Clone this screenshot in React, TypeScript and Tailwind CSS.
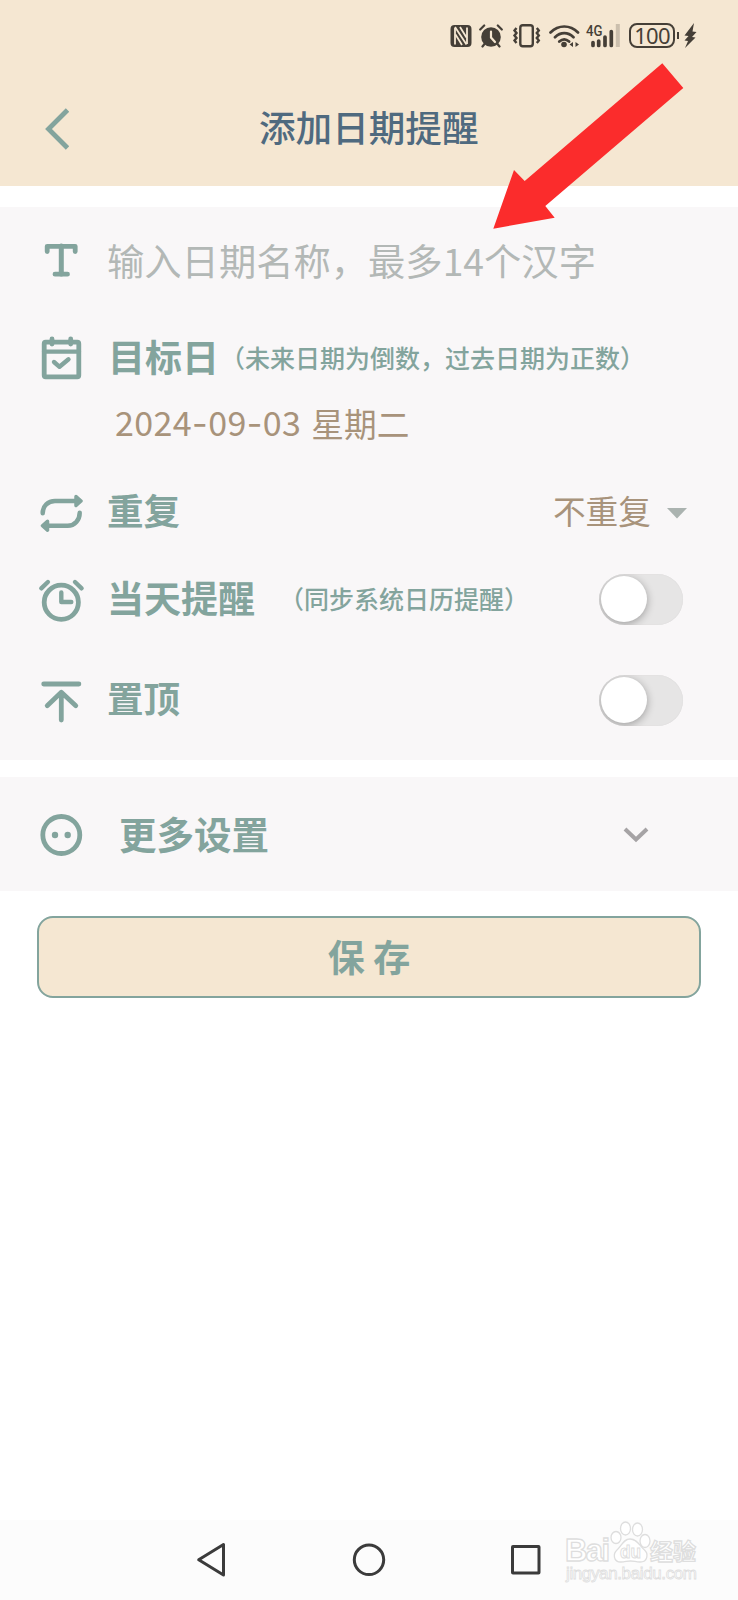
import { useState } from 'react';
import type { ReactNode } from 'react';

function RowIcon({ children }: { children: ReactNode }) {
  return (
    <svg
      width="44"
      height="44"
      viewBox="0 0 44 44"
      fill="none"
      stroke="#83a49d"
      strokeWidth="4.8"
      strokeLinecap="round"
      strokeLinejoin="round"
      className="mr-[24px] shrink-0 overflow-visible"
    >
      {children}
    </svg>
  );
}

function StatusBar() {
  return (
    <div className="flex h-[71px] items-center pl-[450px] text-[#453f37]">
      {/* NFC */}
      <svg width="22" height="24" viewBox="0 0 22 24" fill="none">
        <path d="M4.500 1h13a4 4 0 0 1 4 4v14a4 4 0 0 1-4 4h-13a4 4 0 0 1-4-4V5a4 4 0 0 1 4-4z" fill="currentColor" />
        <path d="M5 4v16.500M17 20V3.500" stroke="#f5e7d2" strokeWidth="1.8" />
        <path d="M5 3l11.500 17.500M10 3l6.500 10.500M5.500 10.500l6.500 10.500" stroke="#f5e7d2" strokeWidth="1.8" />
      </svg>
      {/* alarm */}
      <svg width="24" height="24" viewBox="0 0 24 24" fill="none" className="ml-[7px]">
        <circle cx="12" cy="13" r="9.800" fill="currentColor" />
        <path d="M1.200 5.500l4-4M22.800 5.500l-4-4M5.500 20l-2 2.500M18.500 20l2 2.500" stroke="currentColor" strokeWidth="2.200" strokeLinecap="round" />
        <path d="M12 7.500v6l4 4.500" stroke="#f5e7d2" strokeWidth="2.200" strokeLinecap="round" />
      </svg>
      {/* vibrate */}
      <svg width="30" height="24" viewBox="0 0 30 24" fill="none" stroke="currentColor" className="ml-[9px]">
        <rect x="8.300" y="1.300" width="12.500" height="21" rx="2.500" strokeWidth="2.400" />
        <path d="M4.500 4l-2 2.500 2 2.500-2 2.500 2 2.500-2 2.500 2 2.500M24.800 4l2 2.500-2 2.500 2 2.500-2 2.500 2 2.500-2 2.500" strokeWidth="2.400" />
      </svg>
      {/* wifi */}
      <svg width="32" height="24" viewBox="0 0 32 24" fill="none" stroke="currentColor" className="ml-[7px]">
        <path d="M1.500 8.500c8-8 19.500-8 27.500 0M6 13.200c5.500-5.400 13-5.400 18.500 0M10.300 17.500c3-2.700 6.800-2.700 9.800 0" strokeWidth="2.700" strokeLinecap="round" />
        <circle cx="15" cy="20.500" r="2.800" fill="currentColor" stroke="none" />
        <path d="M20.500 20.500l3.500-2.500v5zM30 20.500l-3.500-2.500v5z" fill="currentColor" stroke="none" />
      </svg>
      {/* signal */}
      <svg width="36" height="24" viewBox="0 0 36 24" className="ml-[5px] overflow-visible">
        <text x="0" y="11.500" fontSize="14" fontWeight="500" fill="currentColor" textLength="16.500" lengthAdjust="spacingAndGlyphs" className="font-['Roboto',sans-serif]">
          4G
        </text>
        <path d="M7 18.500v3M12.700 17v4.500M19 13v8.500M25.300 7.500v14" stroke="currentColor" strokeWidth="3.700" strokeLinecap="round" />
        <path d="M31.800 0v23" stroke="#cbbfad" strokeWidth="4" />
      </svg>
      {/* battery */}
      <div className="ml-[7px] flex h-[25px] w-[46px] items-center justify-center rounded-[8px] border-2 border-current pb-[2px] font-['Noto_Sans'] text-[22px] leading-none tracking-[-0.8px]">
        100
      </div>
      <div className="ml-[2px] h-[7px] w-[2px] bg-current" />
      <svg width="13" height="25" viewBox="0 0 13 25" fill="currentColor" className="ml-[5px]">
        <path d="M10 0L.5 12.500l4 .5L.5 17.500l3.500.5L1 25l10.500-10.500-3.500-.5L12.500 9l-4-.5z" />
      </svg>
    </div>
  );
}

function Switch({ label }: { label: string }) {
  const [on, setOn] = useState(false);
  return (
    <button
      role="switch"
      aria-label={label}
      aria-checked={on}
      onClick={() => setOn(!on)}
      className={`mr-[55px] ml-auto flex h-[51px] w-[84px] items-center overflow-hidden rounded-full p-[2px] shadow-[inset_0_0_1px_#cfcdcd] ${on ? 'justify-end bg-[#83a49d]' : 'bg-[#e6e5e5]'}`}
    >
      <span className="size-[46px] rounded-full bg-white shadow-[0_2px_8px_rgba(0,0,0,0.32)]" />
    </button>
  );
}

function Watermark() {
  return (
    <svg
      width="140"
      height="72"
      viewBox="0 0 140 72"
      fill="#fff"
      stroke="#dedede"
      strokeWidth="1.300"
      className="absolute top-[-4px] left-[563px]"
    >
      <text x="2" y="45" fontSize="31" fontWeight="700" textLength="45" className="font-['Liberation_Sans',sans-serif]">
        Bai
      </text>
      <ellipse cx="53" cy="21.500" rx="5" ry="6" />
      <ellipse cx="62.500" cy="12.500" rx="5" ry="6.500" />
      <ellipse cx="74.500" cy="13.500" rx="5" ry="6.500" />
      <ellipse cx="82" cy="25" rx="5" ry="6.500" />
      <path d="M67 23c-7 0-8 7-13 11-4 3.500-4 12 4 12 4 0 6-1 9.500-1s5.500 1 9.500 1c8 0 8.500-8.500 4.500-12-5-4-7-11-14.500-11z" />
      <text x="57" y="42" fontSize="19" fontWeight="700" strokeWidth="1" textLength="21" lengthAdjust="spacingAndGlyphs" className="font-['Liberation_Sans',sans-serif]">
        du
      </text>
      <text x="87" y="44" fontSize="23" fontWeight="700" className="font-['Noto_Sans_CJK_SC',sans-serif]">
        经验
      </text>
      <text x="3" y="63" fontSize="17" strokeWidth=".8" textLength="131" className="font-['Liberation_Sans',sans-serif]">
        jingyan.baidu.com
      </text>
    </svg>
  );
}

export default function App() {
  return (
    <div className="relative flex h-[1600px] w-[738px] flex-col overflow-hidden bg-white font-['Noto_Sans_CJK_SC',sans-serif] text-[#83a49d]">
      <header className="h-[186px] bg-[#f5e7d2]">
        <StatusBar />
        <div className="flex h-[115px] items-center">
          <svg width="24" height="42" viewBox="0 0 24 42" fill="none" className="ml-[45px]" stroke="#83a49d" strokeWidth="4.800">
            <path d="M22.500 2L3.500 21l19 19" />
          </svg>
          <h1 className="ml-[190px] -mt-[2px] text-[36.600px] leading-none font-medium text-[#4f6a7f]">添加日期提醒</h1>
        </div>
      </header>

      <section className="mt-[21px] h-[553px] bg-[#f9f7f8] pl-[39px]">
        <div className="flex h-[110px] items-center">
          <RowIcon>
            <path d="M8.200 11.500V6.300h28v5.200M16 34.200h12.500" />
            <path d="M22.300 6v28" strokeWidth="5" />
          </RowIcon>
          <span className="-mt-[2px] text-[37.300px] leading-none text-[#b3b8b6]">输入日期名称，最多14个汉字</span>
        </div>

        <div className="flex h-[82px] items-center">
          <RowIcon>
            <rect x="5.200" y="6.200" width="34.600" height="34.600" rx="1.500" />
            <path d="M5 15.700h35" strokeWidth="4.200" />
            <path d="M13 3v5M31.700 3v5" />
            <path d="M15 26l5.500 4.800 9-7.500" strokeWidth="4.400" />
          </RowIcon>
          <span className="ml-px -mt-[4px] text-[37px] leading-none font-bold">目标日</span>
          <span className="ml-px -mt-[2px] text-[25px] leading-none font-medium">（未来日期为倒数，过去日期为正数）</span>
        </div>

        <div className="flex h-[50px] items-center pl-[76px] leading-none text-[#a8937b]">
          <span className="-mt-[2px] text-[34px] tracking-[0.4px]">
            2024<span className="font-['Inter']">-</span>09<span className="font-['Inter']">-</span>03
          </span>
          <span className="ml-[10px] -mt-[2px] text-[32.700px]">星期二</span>
        </div>

        <div className="mt-[20px] flex h-[84px] items-center">
          <RowIcon>
            <path d="M3.700 24.300C3.700 17 9 12 16 12h22M40.700 23.700c0 7.300-5 13-12 13H7" strokeWidth="4.500" />
            <path d="M37 7.500l5 4.500-5 4.500zM8.500 32.200L3.500 36.700l5 4.500z" fill="#83a49d" strokeWidth="3.500" />
          </RowIcon>
          <span className="-mt-[2px] text-[36.500px] leading-none font-bold">重复</span>
          <span className="-mt-[2px] ml-auto text-[32.700px] leading-none text-[#a8937b]">不重复</span>
          <svg width="20" height="11" viewBox="0 0 20 11" fill="#abb3b0" className="mt-[4px] mr-[51px] ml-[16px]">
            <path d="M0 0h20L10 10.500z" />
          </svg>
        </div>

        <div className="flex h-[92px] items-center">
          <RowIcon>
            <circle cx="22.300" cy="25.300" r="17.100" />
            <path d="M2.300 11.300L8.900 5M36 5l6.600 6.300" strokeWidth="4.400" />
            <path d="M22.300 15.500V25h10" strokeWidth="4.400" />
          </RowIcon>
          <span className="-mt-[4px] text-[37px] leading-none font-bold">当天提醒</span>
          <span className="ml-[24px] -mt-[2px] text-[25px] leading-none font-medium">（同步系统日历提醒）</span>
          <Switch label="当天提醒" />
        </div>

        <div className="flex h-[110px] items-center">
          <RowIcon>
            <path d="M4.700 6h35.200M22.300 14.500v27.500M8.200 27.700l14.100-13.500 14.500 13.500" />
          </RowIcon>
          <span className="-mt-[4px] text-[36.500px] leading-none font-bold">置顶</span>
          <Switch label="置顶" />
        </div>
      </section>

      <section className="mt-[17px] flex h-[114px] items-center bg-[#f9f7f8] pl-[39px]">
        <RowIcon>
          <circle cx="22.300" cy="23" r="18.500" />
          <circle cx="16" cy="23" r="3.200" fill="#83a49d" stroke="none" />
          <circle cx="28.700" cy="23" r="3.200" fill="#83a49d" stroke="none" />
        </RowIcon>
        <span className="-mt-[3px] ml-[12px] text-[37.500px] leading-none font-bold">更多设置</span>
        <svg width="26" height="16" viewBox="0 0 26 16" fill="none" stroke="#a6a3a5" strokeWidth="4" className="mt-[2px] mr-[89px] ml-auto">
          <path d="M2 2l11 10.500L24 2" />
        </svg>
      </section>

      <button className="mx-[37px] mt-[25px] flex h-[82px] items-center justify-center rounded-[16px] border-2 border-[#83a49d] bg-[#f5e7d2] text-[37px] leading-none font-bold">
        <span className="-mt-[2px] whitespace-pre">保 存</span>
      </button>

      <nav className="relative mt-auto flex h-[80px] items-center bg-[#fcfcfc]">
        <svg width="349" height="40" viewBox="0 0 349 40" fill="none" stroke="#3b3b3b" strokeWidth="3" strokeLinejoin="round" className="ml-[194px]">
          <path d="M29.500 4.500v30.500L4.700 19.800z" />
          <circle cx="175" cy="19.800" r="14.700" />
          <rect x="318.500" y="6.500" width="26.500" height="26.500" rx="0.500" />
        </svg>
        <Watermark />
      </nav>

      {/* pointer to the name field */}
      <svg width="192" height="168" viewBox="0 0 192 168" className="absolute top-[62px] left-[493px]">
        <path d="M169.300 1.300l21 24.700L52.300 144l9.400 11.700L.3 166.700 21 108l10.700 11z" fill="#fb2c2c" />
      </svg>
    </div>
  );
}
